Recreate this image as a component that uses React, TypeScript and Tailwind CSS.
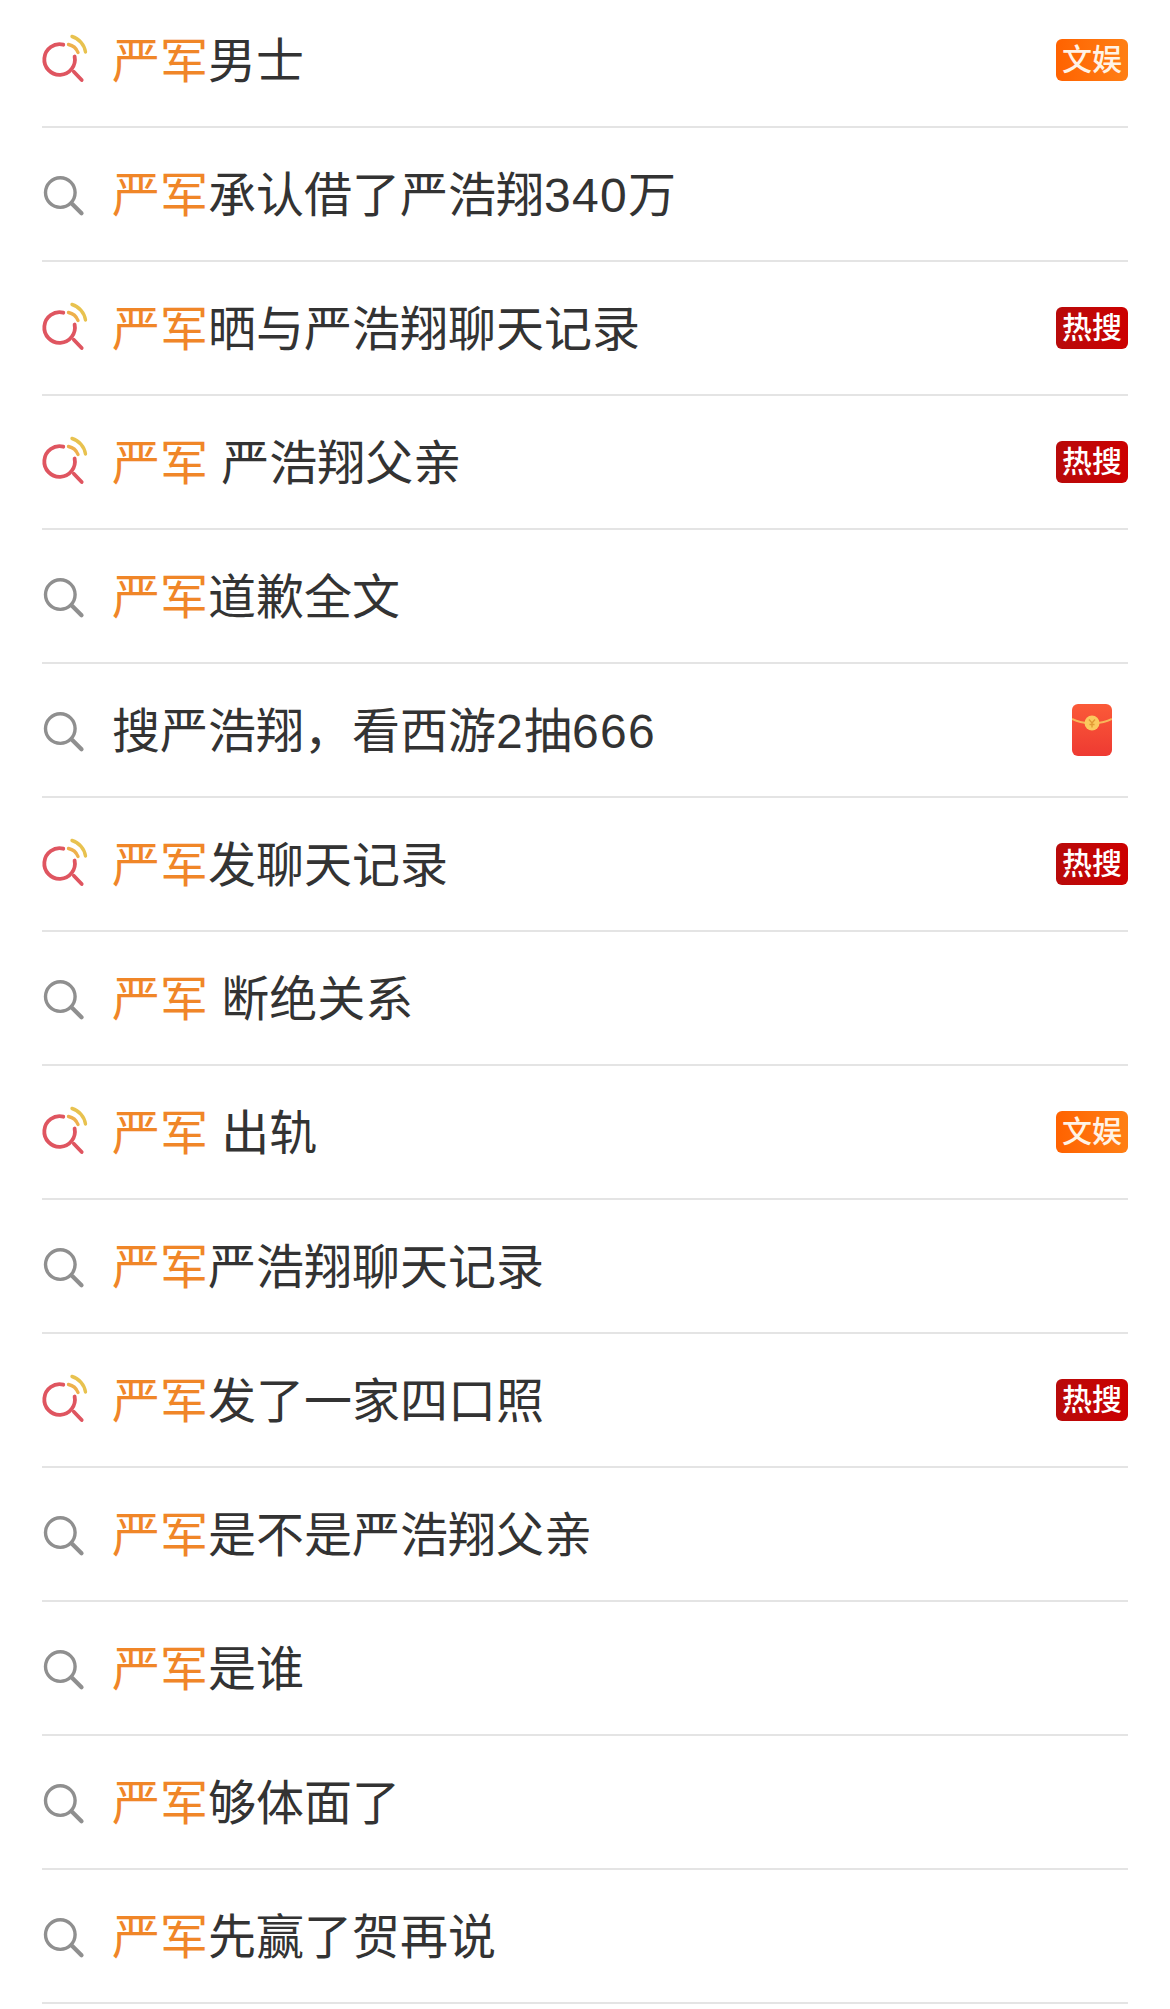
const F = '"Liberation Sans", "Noto Sans CJK SC", sans-serif';

type Row = { h?: boolean; o?: string; sp?: boolean; t: string; b?: 'w' | 'r' | 'e' };

const rows: Row[] = [
  { h: true, o: '严军', t: '男士', b: 'w' },
  { o: '严军', t: '承认借了严浩翔340万' },
  { h: true, o: '严军', t: '晒与严浩翔聊天记录', b: 'r' },
  { h: true, o: '严军', sp: true, t: '严浩翔父亲', b: 'r' },
  { o: '严军', t: '道歉全文' },
  { t: '搜严浩翔，看西游2抽666', b: 'e' },
  { h: true, o: '严军', t: '发聊天记录', b: 'r' },
  { o: '严军', sp: true, t: '断绝关系' },
  { h: true, o: '严军', sp: true, t: '出轨', b: 'w' },
  { o: '严军', t: '严浩翔聊天记录' },
  { h: true, o: '严军', t: '发了一家四口照', b: 'r' },
  { o: '严军', t: '是不是严浩翔父亲' },
  { o: '严军', t: '是谁' },
  { o: '严军', t: '够体面了' },
  { o: '严军', t: '先赢了贺再说' },
];

function HotIcon() {
  return (
    <svg width="44" height="44" viewBox="0 0 44 44" fill="none" className="overflow-visible">
      <path d="M21.3 6.7 A15.3 15.3 0 1 0 32.6 18.5" stroke="#df5560" strokeWidth="3.8" strokeLinecap="round" />
      <path d="M31.8 33.7 L39.7 42" stroke="#df5560" strokeWidth="3.8" strokeLinecap="round" />
      <path d="M30 -1.5 A19 19 0 0 1 43.5 14" stroke="#e8c24f" strokeWidth="3.4" strokeLinecap="round" />
      <path d="M26.5 6.5 A13 13 0 0 1 36 14.5" stroke="#eeb04c" strokeWidth="3.4" strokeLinecap="round" />
    </svg>
  );
}

function SearchIcon() {
  return (
    <svg width="44" height="44" viewBox="0 0 44 44" fill="none" className="overflow-visible">
      <circle cx="18.3" cy="20.6" r="14.8" stroke="#8f8f8f" strokeWidth="3.4" />
      <path d="M30.5 32.3 L39.5 41.3" stroke="#8f8f8f" strokeWidth="4.2" strokeLinecap="round" />
    </svg>
  );
}

function Envelope() {
  return (
    <svg width="40" height="52" viewBox="0 0 40 52">
      <defs>
        <linearGradient id="env" x1="0" y1="0" x2="0" y2="1">
          <stop offset="0" stopColor="#fb5a38" />
          <stop offset="1" stopColor="#ee3a32" />
        </linearGradient>
      </defs>
      <rect width="40" height="52" rx="6" fill="url(#env)" />
      <path d="M0 15 Q10 20 20 19 Q30 20 40 15" stroke="#f8b65a" strokeWidth="2" fill="none" />
      <circle cx="20" cy="19" r="7.5" fill="#fbc95e" />
      <path d="M17 15.5 L20 19 L23 15.5 M20 19 V23.5 M17.5 20.5 H22.5" stroke="#e29a35" strokeWidth="1.4" fill="none" />
    </svg>
  );
}

function Badge({ kind }: { kind: 'w' | 'r' | 'e' }) {
  if (kind === 'e') {
    return (
      <div className="flex w-[72px] justify-center">
        <Envelope />
      </div>
    );
  }
  return (
    <div
      className={
        kind === 'w'
          ? 'flex h-[42px] w-[72px] items-center justify-center rounded-[6px] bg-gradient-to-r from-[#ff6200] to-[#ff7f14] text-[30px] font-medium leading-none text-[#fff3e6]'
          : 'flex h-[42px] w-[72px] items-center justify-center rounded-[6px] bg-gradient-to-r from-[#b80a0a] to-[#cc0000] text-[30px] font-medium leading-none text-white'
      }
    >
      {kind === 'w' ? '文娱' : '热搜'}
    </div>
  );
}

function Body({ text }: { text: string }) {
  return (
    <>
      {text.split(/(\d+)/).map((part, i) =>
        /^\d+$/.test(part) ? (
          <span key={i} className="tracking-[1.3px]">
            {part}
          </span>
        ) : (
          part
        ),
      )}
    </>
  );
}

export default function App() {
  return (
    <div className="min-h-[2009px] overflow-hidden bg-white" style={{ fontFamily: F }}>
      <div className="-mt-[6px] px-[42px]">
        {rows.map((r, i) => (
          <div key={i} className="flex h-[134px] items-center border-b-2 border-[#e4e4e4]">
            <div className="flex w-[70px] shrink-0 items-center">{r.h ? <HotIcon /> : <SearchIcon />}</div>
            <div className="min-w-0 flex-1 whitespace-pre pt-[3px] text-[48px] leading-none text-[#333333]">
              {r.o && <span className="text-[#f08628]">{r.o}</span>}
              {r.sp && <span> </span>}
              <Body text={r.t} />
            </div>
            {r.b && <Badge kind={r.b} />}
          </div>
        ))}
      </div>
    </div>
  );
}
